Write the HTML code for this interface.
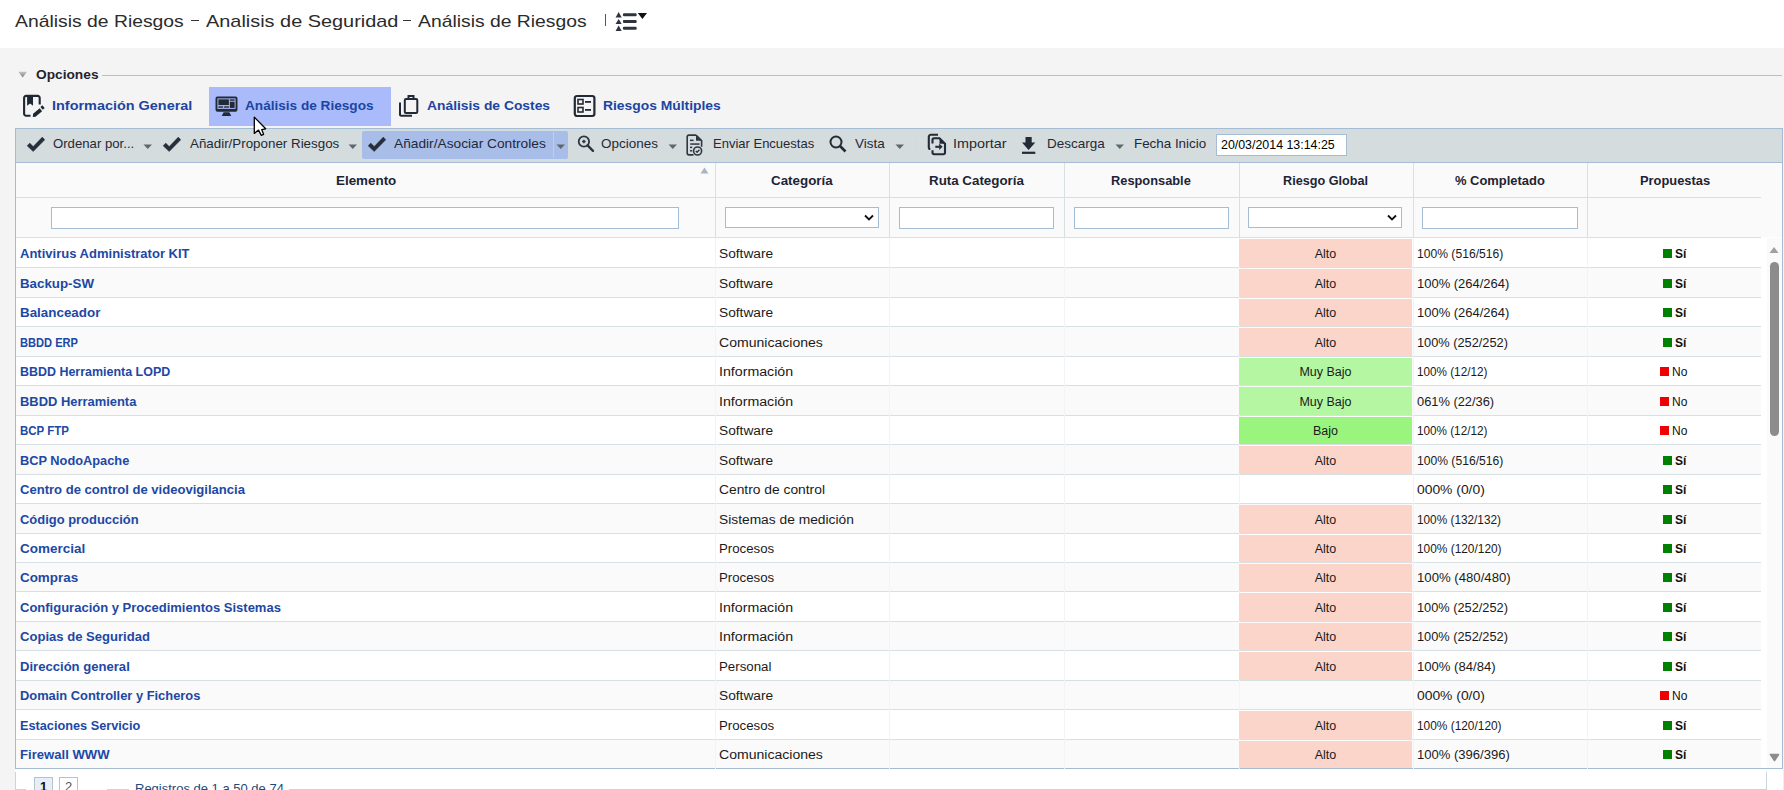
<!DOCTYPE html><html><head><meta charset="utf-8"><title>Análisis de Riesgos</title><style>
*{margin:0;padding:0;box-sizing:border-box}
html,body{width:1784px;height:790px;overflow:hidden;background:#f4f4f4;font-family:"Liberation Sans",sans-serif}
.a{position:absolute}
.t{position:absolute;white-space:nowrap;transform-origin:0 0;line-height:1}
#hdr{position:absolute;left:0;top:0;width:1784px;height:48px;background:#fff}
.title{font-size:17px;color:#2b2b2b}
.leg{font-size:13.5px;font-weight:bold;color:#1f2430}
.tab{font-size:13.5px;font-weight:bold;color:#1c45a2}
.tb{font-size:13px;color:#1f2937}
.th{font-size:12.5px;font-weight:bold;color:#1e2433}
.lnk{font-size:12px;font-weight:bold;color:#1d48a5}
.cel{font-size:12.5px;color:#1a1a1a}
.ctr{font-size:12.5px;color:#1a1a1a}
.pr{font-size:12px;color:#111}
.prb{font-size:12px;font-weight:bold;color:#111}
</style></head><body>
<div id="hdr">
<span class="t title" style="left:15px;top:13px;transform:scaleX(1.1378);">Análisis de Riesgos</span>
<span class="t title" style="left:205.5px;top:13px;transform:scaleX(1.1701);">Analisis de Seguridad</span>
<span class="t title" style="left:417.5px;top:13px;transform:scaleX(1.1372);">Análisis de Riesgos</span>
<div class="a" style="left:191.2px;top:19.8px;width:7.8px;height:1.4px;background:#333"></div>
<div class="a" style="left:403.4px;top:19.8px;width:7.6px;height:1.4px;background:#333"></div>
<div class="a" style="left:605px;top:14px;width:1px;height:12px;background:#1a5fc8"></div>
<svg class="a" style="left:615px;top:11px" width="34" height="22" viewBox="0 0 34 22">
<g fill="#2d3440"><path d="M0.6 6.6 L3.65 1 L6.7 6.6Z"/><path d="M0.6 13.1 L3.65 8 L6.7 13.1Z"/><path d="M0.6 20 L3.65 14.5 L6.7 20Z"/>
<rect x="7.9" y="2.3" width="13.8" height="3" rx="1.2"/><rect x="7.9" y="9" width="13.8" height="3" rx="1.2"/><rect x="7.9" y="15.7" width="13.8" height="3" rx="1.2"/></g>
<path d="M22.8 2 L32 2 L27.4 7.9Z" fill="#111"/></svg>
</div>
<svg class="a" style="left:18px;top:71px" width="10" height="8"><defs><linearGradient id="lg1" x1="0" y1="0" x2="0" y2="1"><stop offset="0" stop-color="#c4c4c4"/><stop offset="1" stop-color="#7c7c7c"/></linearGradient></defs><path d="M0.3 0.8 L9 0.8 L4.65 6.5Z" fill="url(#lg1)"/></svg>
<span class="t leg" style="left:36px;top:67.5px;transform:scaleX(1.0161);">Opciones</span>
<div class="a" style="left:102px;top:75px;width:1680px;height:1px;background:#a9c1d9"></div>
<div class="a" style="left:209px;top:87px;width:182px;height:39px;background:#a9bbfb"></div>
<span class="t tab" style="left:52px;top:98.8px;transform:scaleX(1.0687);">Información General</span>
<span class="t tab" style="left:245px;top:98.8px;transform:scaleX(1.0078);">Análisis de Riesgos</span>
<span class="t tab" style="left:427px;top:98.8px;transform:scaleX(1.0250);">Análisis de Costes</span>
<span class="t tab" style="left:603px;top:98.8px;transform:scaleX(1.0261);">Riesgos Múltiples</span>
<svg class="a" style="left:22px;top:94px" width="24" height="24" viewBox="0 0 24 24">
<path d="M8.5 21.7 H4.1 A2 2 0 0 1 2.1 19.7 V3.9 A2 2 0 0 1 4.1 1.9 H15.7 A2 2 0 0 1 17.7 3.9 V10.4" fill="none" stroke="#1f2733" stroke-width="2.1"/>
<path d="M5.1 1.9 H11 V11.8 L8.05 9.4 L5.1 11.8Z" fill="#1f2733"/>
<path d="M10.8 22.9 L11.1 19.85 L17.7 14.25 L20.1 17.15 L13.5 22.75Z" fill="#1f2733"/>
<path d="M19.6 14.35 L21.5 12.7" stroke="#1f2733" stroke-width="3.6"/></svg>
<svg class="a" style="left:215px;top:96px" width="23" height="21" viewBox="0 0 24 22">
<rect x="0.5" y="0.5" width="23" height="16" rx="2" fill="#222a35"/>
<rect x="2.5" y="2.5" width="19" height="11" fill="#a9bbfb"/>
<rect x="3.5" y="3.5" width="11" height="6" fill="#222a35"/><rect x="15.5" y="3.5" width="5" height="1.5" fill="#222a35"/><rect x="15.5" y="6" width="5" height="6.5" fill="#222a35"/>
<rect x="3.5" y="10.8" width="5" height="1.5" fill="#222a35"/><rect x="9.5" y="10.8" width="5" height="1.5" fill="#222a35"/>
<path d="M9 17 H15 L17 21 H7Z" fill="#222a35"/></svg>
<svg class="a" style="left:398px;top:94px" width="22" height="24" viewBox="0 0 22 24">
<rect x="6.8" y="5" width="12.5" height="14" rx="1.2" fill="none" stroke="#222a35" stroke-width="2"/>
<path d="M10.5 5 V2 H15.5 V5" fill="none" stroke="#222a35" stroke-width="2"/>
<path d="M2 8.5 V20.5 A1.2 1.2 0 0 0 3.2 21.8 H14" fill="none" stroke="#222a35" stroke-width="2"/></svg>
<svg class="a" style="left:573px;top:94px" width="23" height="24" viewBox="0 0 23 24">
<rect x="1.8" y="2" width="19.6" height="20" rx="2.2" fill="none" stroke="#222a35" stroke-width="2.2"/>
<rect x="5" y="5.5" width="5" height="4.5" fill="none" stroke="#222a35" stroke-width="1.6"/>
<rect x="5" y="13.5" width="5" height="4.5" fill="none" stroke="#222a35" stroke-width="1.6"/>
<rect x="12" y="7" width="6" height="1.8" fill="#222a35"/><rect x="12" y="15" width="6" height="1.8" fill="#222a35"/></svg>
<div class="a" style="left:15px;top:128px;width:1768px;height:35px;background:#d5dcdd;border:1px solid #a4bdd5"></div>
<div class="a" style="left:362px;top:131px;width:206px;height:28px;background:#a9bde9;border-radius:2px"></div>
<div class="a" style="left:553px;top:132px;width:1px;height:26px;background:#c2cde8"></div>
<div class="a" style="left:915px;top:134px;width:1px;height:24px;background:#d0dae0"></div>
<svg class="a" style="left:26px;top:136px" width="20" height="17" viewBox="0 0 20 17"><path d="M1.1 9.8 L3.8 7.1 L7.2 10.5 L16.3 1.1 L18.8 3.8 L7.2 15.6Z" fill="#262e3a" stroke="#262e3a" stroke-width="0.4" stroke-linejoin="round"/></svg>
<svg class="a" style="left:162px;top:136px" width="20" height="17" viewBox="0 0 20 17"><path d="M1.1 9.8 L3.8 7.1 L7.2 10.5 L16.3 1.1 L18.8 3.8 L7.2 15.6Z" fill="#262e3a" stroke="#262e3a" stroke-width="0.4" stroke-linejoin="round"/></svg>
<svg class="a" style="left:367px;top:136px" width="20" height="17" viewBox="0 0 20 17"><path d="M1.1 9.8 L3.8 7.1 L7.2 10.5 L16.3 1.1 L18.8 3.8 L7.2 15.6Z" fill="#262e3a" stroke="#262e3a" stroke-width="0.4" stroke-linejoin="round"/></svg>
<svg class="a" style="left:143px;top:144px" width="10" height="6"><path d="M0.5 0.5 H9 L4.75 5Z" fill="#5f6770"/></svg>
<svg class="a" style="left:348px;top:144px" width="10" height="6"><path d="M0.5 0.5 H9 L4.75 5Z" fill="#5f6770"/></svg>
<svg class="a" style="left:556px;top:144px" width="10" height="6"><path d="M0.5 0.5 H9 L4.75 5Z" fill="#5f6770"/></svg>
<svg class="a" style="left:668px;top:144px" width="10" height="6"><path d="M0.5 0.5 H9 L4.75 5Z" fill="#5f6770"/></svg>
<svg class="a" style="left:895px;top:144px" width="10" height="6"><path d="M0.5 0.5 H9 L4.75 5Z" fill="#5f6770"/></svg>
<svg class="a" style="left:1115px;top:144px" width="10" height="6"><path d="M0.5 0.5 H9 L4.75 5Z" fill="#5f6770"/></svg>
<span class="t tb" style="left:53px;top:137px;transform:scaleX(1.0125);">Ordenar por...</span>
<span class="t tb" style="left:190px;top:137px;transform:scaleX(1.0276);">Añadir/Proponer Riesgos</span>
<span class="t tb" style="left:394px;top:137px;transform:scaleX(1.0556);">Añadir/Asociar Controles</span>
<span class="t tb" style="left:601px;top:137px;transform:scaleX(1.0364);">Opciones</span>
<span class="t tb" style="left:713px;top:137px;transform:scaleX(1.0000);">Enviar Encuestas</span>
<span class="t tb" style="left:855px;top:137px;transform:scaleX(1.0345);">Vista</span>
<span class="t tb" style="left:953px;top:137px;transform:scaleX(1.1042);">Importar</span>
<span class="t tb" style="left:1047px;top:137px;transform:scaleX(1.0357);">Descarga</span>
<span class="t tb" style="left:1134px;top:137px;transform:scaleX(1.0286);">Fecha Inicio</span>
<svg class="a" style="left:577px;top:135px" width="18" height="18" viewBox="0 0 18 18">
<circle cx="6.9" cy="6.5" r="5.2" fill="none" stroke="#2f3540" stroke-width="1.8"/><path d="M10.6 10.4 L16 15.8" stroke="#2f3540" stroke-width="2.4" stroke-linecap="round"/>
<path d="M6.9 4.7 V8.3 M5.1 6.5 H8.7" stroke="#2f3540" stroke-width="1.5"/></svg>
<svg class="a" style="left:686px;top:134px" width="18" height="23" viewBox="0 0 18 23">
<g fill="none" stroke="#2f3742" stroke-width="1.6">
<path d="M10 1.1 H3 A1.8 1.8 0 0 0 1.2 2.9 V19.1 A1.8 1.8 0 0 0 3 20.9 H7.5"/>
<path d="M10 1.1 L15.6 6.7 V12.8"/>
<circle cx="11.6" cy="17" r="4"/><path d="M9.8 17 L11.1 18.3 L13.4 15.8" stroke-width="1.3"/></g>
<path d="M10 1.1 V6.7 H15.6Z" fill="#2f3742"/>
<g fill="#2f3742"><rect x="4" y="5.6" width="3.6" height="1.5"/><rect x="4.2" y="9.3" width="9.3" height="1.5"/><rect x="4" y="12.6" width="2.2" height="1.5"/><rect x="4" y="16" width="2.2" height="1.5"/></g></svg>
<svg class="a" style="left:829px;top:135px" width="18" height="18" viewBox="0 0 18 18">
<circle cx="7" cy="7" r="5.5" fill="none" stroke="#232b38" stroke-width="2"/><path d="M11 11 L16.5 16.5" stroke="#232b38" stroke-width="2.6"/></svg>
<svg class="a" style="left:927px;top:133px" width="20" height="23" viewBox="0 0 20 23">
<g fill="none" stroke="#232b38" stroke-width="2.1">
<path d="M11 1.8 H3.8 A2 2 0 0 0 1.8 3.8 V14.5 A1.5 1.5 0 0 0 3.3 16"/>
<path d="M5.5 10.5 V6.7 A1.5 1.5 0 0 1 7 5.2 H12.5 L18 10.7 V19.5 A1.7 1.7 0 0 1 16.3 21.2 H7.2 A1.7 1.7 0 0 1 5.5 19.5 V17.2"/>
<path d="M8.3 13.8 H12.8"/></g>
<path d="M12.5 5.2 V10.7 H18Z" fill="#232b38"/><path d="M12.2 10.6 L15.6 13.8 L12.2 17Z" fill="#232b38"/></svg>
<svg class="a" style="left:1020px;top:136px" width="18" height="19" viewBox="0 0 18 19">
<path d="M5.5 1.1 H11.7 V6.5 H15.3 L8.6 13.9 L2 6.5 H5.5Z" fill="#232b38"/><rect x="2" y="15.7" width="13.3" height="2.2" fill="#232b38"/></svg>
<div class="a" style="left:1216px;top:134px;width:131px;height:22px;background:#fff;border:1px solid #a4bdd5"></div>
<span class="t tb" style="left:1221px;top:139px;transform:scaleX(0.9913);font-size:12.5px;color:#000">20/03/2014 13:14:25</span>
<div class="a" style="left:15px;top:163px;width:1768px;height:606px;background:#fff;border:1px solid #a4bdd5;border-top:none"></div>
<div class="a" style="left:16px;top:163px;width:1766px;height:74px;background:#fafafa"></div>
<div class="a" style="left:16px;top:197px;width:1745px;height:1px;background:#d9e0e3"></div>
<div class="a" style="left:16px;top:237px;width:1745px;height:1px;background:#d9e0e3"></div>
<div class="a" style="left:715px;top:163px;width:1px;height:74px;background:#d9e0e3"></div>
<div class="a" style="left:889px;top:163px;width:1px;height:74px;background:#d9e0e3"></div>
<div class="a" style="left:1064px;top:163px;width:1px;height:74px;background:#d9e0e3"></div>
<div class="a" style="left:1239px;top:163px;width:1px;height:74px;background:#d9e0e3"></div>
<div class="a" style="left:1413px;top:163px;width:1px;height:74px;background:#d9e0e3"></div>
<div class="a" style="left:1587px;top:163px;width:1px;height:74px;background:#d9e0e3"></div>
<span class="t th" style="left:336px;top:174.8px;transform:scaleX(1.0714);">Elemento</span>
<span class="t th" style="left:771px;top:174.8px;transform:scaleX(1.0690);">Categoría</span>
<span class="t th" style="left:929px;top:174.8px;transform:scaleX(1.0674);">Ruta Categoría</span>
<span class="t th" style="left:1111px;top:174.8px;transform:scaleX(1.0256);">Responsable</span>
<span class="t th" style="left:1283px;top:174.8px;transform:scaleX(1.0119);">Riesgo Global</span>
<span class="t th" style="left:1455px;top:174.8px;transform:scaleX(1.0345);">% Completado</span>
<span class="t th" style="left:1640px;top:174.8px;transform:scaleX(1.0294);">Propuestas</span>
<svg class="a" style="left:700px;top:167px" width="9" height="7"><path d="M0.5 6.5 L4.5 0.5 L8.5 6.5Z" fill="#a9b4c4"/></svg>
<div class="a" style="left:51px;top:207px;width:628px;height:22px;background:#fff;border:1px solid #a4bdd5"></div>
<div class="a" style="left:899px;top:207px;width:155px;height:22px;background:#fff;border:1px solid #a4bdd5"></div>
<div class="a" style="left:1074px;top:207px;width:155px;height:22px;background:#fff;border:1px solid #a4bdd5"></div>
<div class="a" style="left:1422px;top:207px;width:156px;height:22px;background:#fff;border:1px solid #a4bdd5"></div>
<div class="a" style="left:725px;top:207px;width:154px;height:21px;background:#fff;border:1px solid #a4bdd5"></div><svg class="a" style="left:864px;top:213.5px" width="10" height="8"><path d="M1 1.5 L5 5.5 L9 1.5" fill="none" stroke="#111" stroke-width="1.8"/></svg>
<div class="a" style="left:1248px;top:207px;width:154px;height:21px;background:#fff;border:1px solid #a4bdd5"></div><svg class="a" style="left:1387px;top:213.5px" width="10" height="8"><path d="M1 1.5 L5 5.5 L9 1.5" fill="none" stroke="#111" stroke-width="1.8"/></svg>
<div class="a" style="left:16px;top:238px;width:1745px;height:29px;background:#ffffff"></div>
<div class="a" style="left:16px;top:267px;width:1745px;height:1px;background:#d9e0e3"></div>
<span class="t lnk" style="left:20px;top:248px;transform:scaleX(1.0853);">Antivirus Administrator KIT</span>
<span class="t cel" style="left:719px;top:248px;transform:scaleX(1.0980);">Software</span>
<span class="t cel" style="left:1417px;top:248px;transform:scaleX(0.9697);">100% (516/516)</span>
<div class="a" style="left:1663px;top:249.0px;width:9px;height:9px;background:#008000"></div>
<span class="t prb" style="left:1675px;top:248px;">Sí</span>
<div class="a" style="left:16px;top:268px;width:1745px;height:29px;background:#fafafa"></div>
<div class="a" style="left:16px;top:297px;width:1745px;height:1px;background:#d9e0e3"></div>
<span class="t lnk" style="left:20px;top:278px;transform:scaleX(1.1090);">Backup-SW</span>
<span class="t cel" style="left:719px;top:278px;transform:scaleX(1.0980);">Software</span>
<span class="t cel" style="left:1417px;top:278px;transform:scaleX(1.0371);">100% (264/264)</span>
<div class="a" style="left:1663px;top:279.0px;width:9px;height:9px;background:#008000"></div>
<span class="t prb" style="left:1675px;top:278px;">Sí</span>
<div class="a" style="left:16px;top:298px;width:1745px;height:28px;background:#ffffff"></div>
<div class="a" style="left:16px;top:326px;width:1745px;height:1px;background:#d9e0e3"></div>
<span class="t lnk" style="left:20px;top:307px;transform:scaleX(1.1153);">Balanceador</span>
<span class="t cel" style="left:719px;top:307px;transform:scaleX(1.0980);">Software</span>
<span class="t cel" style="left:1417px;top:307px;transform:scaleX(1.0371);">100% (264/264)</span>
<div class="a" style="left:1663px;top:308.0px;width:9px;height:9px;background:#008000"></div>
<span class="t prb" style="left:1675px;top:307px;">Sí</span>
<div class="a" style="left:16px;top:327px;width:1745px;height:29px;background:#fafafa"></div>
<div class="a" style="left:16px;top:356px;width:1745px;height:1px;background:#d9e0e3"></div>
<span class="t lnk" style="left:20px;top:337px;transform:scaleX(0.9254);">BBDD ERP</span>
<span class="t cel" style="left:719px;top:337px;transform:scaleX(1.1239);">Comunicaciones</span>
<span class="t cel" style="left:1417px;top:337px;transform:scaleX(1.0225);">100% (252/252)</span>
<div class="a" style="left:1663px;top:338.0px;width:9px;height:9px;background:#008000"></div>
<span class="t prb" style="left:1675px;top:337px;">Sí</span>
<div class="a" style="left:16px;top:357px;width:1745px;height:28px;background:#ffffff"></div>
<div class="a" style="left:16px;top:385px;width:1745px;height:1px;background:#d9e0e3"></div>
<span class="t lnk" style="left:20px;top:366px;transform:scaleX(1.0379);">BBDD Herramienta LOPD</span>
<span class="t cel" style="left:719px;top:366px;transform:scaleX(1.1354);">Información</span>
<span class="t cel" style="left:1417px;top:366px;transform:scaleX(0.9373);">100% (12/12)</span>
<div class="a" style="left:1660px;top:367.0px;width:9px;height:9px;background:#f00000"></div>
<span class="t pr" style="left:1672px;top:366px;">No</span>
<div class="a" style="left:16px;top:386px;width:1745px;height:29px;background:#fafafa"></div>
<div class="a" style="left:16px;top:415px;width:1745px;height:1px;background:#d9e0e3"></div>
<span class="t lnk" style="left:20px;top:396px;transform:scaleX(1.0769);">BBDD Herramienta</span>
<span class="t cel" style="left:719px;top:396px;transform:scaleX(1.1354);">Información</span>
<span class="t cel" style="left:1417px;top:396px;transform:scaleX(1.0280);">061% (22/36)</span>
<div class="a" style="left:1660px;top:397.0px;width:9px;height:9px;background:#f00000"></div>
<span class="t pr" style="left:1672px;top:396px;">No</span>
<div class="a" style="left:16px;top:416px;width:1745px;height:28px;background:#ffffff"></div>
<div class="a" style="left:16px;top:444px;width:1745px;height:1px;background:#d9e0e3"></div>
<span class="t lnk" style="left:20px;top:425px;transform:scaleX(0.9569);">BCP FTP</span>
<span class="t cel" style="left:719px;top:425px;transform:scaleX(1.0980);">Software</span>
<span class="t cel" style="left:1417px;top:425px;transform:scaleX(0.9373);">100% (12/12)</span>
<div class="a" style="left:1660px;top:426.0px;width:9px;height:9px;background:#f00000"></div>
<span class="t pr" style="left:1672px;top:425px;">No</span>
<div class="a" style="left:16px;top:445px;width:1745px;height:29px;background:#fafafa"></div>
<div class="a" style="left:16px;top:474px;width:1745px;height:1px;background:#d9e0e3"></div>
<span class="t lnk" style="left:20px;top:455px;transform:scaleX(1.0667);">BCP NodoApache</span>
<span class="t cel" style="left:719px;top:455px;transform:scaleX(1.0980);">Software</span>
<span class="t cel" style="left:1417px;top:455px;transform:scaleX(0.9697);">100% (516/516)</span>
<div class="a" style="left:1663px;top:456.0px;width:9px;height:9px;background:#008000"></div>
<span class="t prb" style="left:1675px;top:455px;">Sí</span>
<div class="a" style="left:16px;top:475px;width:1745px;height:28px;background:#ffffff"></div>
<div class="a" style="left:16px;top:503px;width:1745px;height:1px;background:#d9e0e3"></div>
<span class="t lnk" style="left:20px;top:484px;transform:scaleX(1.0884);">Centro de control de videovigilancia</span>
<span class="t cel" style="left:719px;top:484px;transform:scaleX(1.1052);">Centro de control</span>
<span class="t cel" style="left:1417px;top:484px;transform:scaleX(1.1082);">000% (0/0)</span>
<div class="a" style="left:1663px;top:485.0px;width:9px;height:9px;background:#008000"></div>
<span class="t prb" style="left:1675px;top:484px;">Sí</span>
<div class="a" style="left:16px;top:504px;width:1745px;height:29px;background:#fafafa"></div>
<div class="a" style="left:16px;top:533px;width:1745px;height:1px;background:#d9e0e3"></div>
<span class="t lnk" style="left:20px;top:514px;transform:scaleX(1.0782);">Código producción</span>
<span class="t cel" style="left:719px;top:514px;transform:scaleX(1.1025);">Sistemas de medición</span>
<span class="t cel" style="left:1417px;top:514px;transform:scaleX(0.9438);">100% (132/132)</span>
<div class="a" style="left:1663px;top:515.0px;width:9px;height:9px;background:#008000"></div>
<span class="t prb" style="left:1675px;top:514px;">Sí</span>
<div class="a" style="left:16px;top:534px;width:1745px;height:28px;background:#ffffff"></div>
<div class="a" style="left:16px;top:562px;width:1745px;height:1px;background:#d9e0e3"></div>
<span class="t lnk" style="left:20px;top:543px;transform:scaleX(1.1224);">Comercial</span>
<span class="t cel" style="left:719px;top:543px;transform:scaleX(1.0596);">Procesos</span>
<span class="t cel" style="left:1417px;top:543px;transform:scaleX(0.9506);">100% (120/120)</span>
<div class="a" style="left:1663px;top:544.0px;width:9px;height:9px;background:#008000"></div>
<span class="t prb" style="left:1675px;top:543px;">Sí</span>
<div class="a" style="left:16px;top:563px;width:1745px;height:28px;background:#fafafa"></div>
<div class="a" style="left:16px;top:591px;width:1745px;height:1px;background:#d9e0e3"></div>
<span class="t lnk" style="left:20px;top:572px;transform:scaleX(1.1173);">Compras</span>
<span class="t cel" style="left:719px;top:572px;transform:scaleX(1.0596);">Procesos</span>
<span class="t cel" style="left:1417px;top:572px;transform:scaleX(1.0528);">100% (480/480)</span>
<div class="a" style="left:1663px;top:573.0px;width:9px;height:9px;background:#008000"></div>
<span class="t prb" style="left:1675px;top:572px;">Sí</span>
<div class="a" style="left:16px;top:592px;width:1745px;height:29px;background:#ffffff"></div>
<div class="a" style="left:16px;top:621px;width:1745px;height:1px;background:#d9e0e3"></div>
<span class="t lnk" style="left:20px;top:602px;transform:scaleX(1.0838);">Configuración y Procedimientos Sistemas</span>
<span class="t cel" style="left:719px;top:602px;transform:scaleX(1.1354);">Información</span>
<span class="t cel" style="left:1417px;top:602px;transform:scaleX(1.0225);">100% (252/252)</span>
<div class="a" style="left:1663px;top:603.0px;width:9px;height:9px;background:#008000"></div>
<span class="t prb" style="left:1675px;top:602px;">Sí</span>
<div class="a" style="left:16px;top:622px;width:1745px;height:28px;background:#fafafa"></div>
<div class="a" style="left:16px;top:650px;width:1745px;height:1px;background:#d9e0e3"></div>
<span class="t lnk" style="left:20px;top:631px;transform:scaleX(1.0882);">Copias de Seguridad</span>
<span class="t cel" style="left:719px;top:631px;transform:scaleX(1.1354);">Información</span>
<span class="t cel" style="left:1417px;top:631px;transform:scaleX(1.0225);">100% (252/252)</span>
<div class="a" style="left:1663px;top:632.0px;width:9px;height:9px;background:#008000"></div>
<span class="t prb" style="left:1675px;top:631px;">Sí</span>
<div class="a" style="left:16px;top:651px;width:1745px;height:29px;background:#ffffff"></div>
<div class="a" style="left:16px;top:680px;width:1745px;height:1px;background:#d9e0e3"></div>
<span class="t lnk" style="left:20px;top:661px;transform:scaleX(1.0901);">Dirección general</span>
<span class="t cel" style="left:719px;top:661px;transform:scaleX(1.0633);">Personal</span>
<span class="t cel" style="left:1417px;top:661px;transform:scaleX(1.0467);">100% (84/84)</span>
<div class="a" style="left:1663px;top:662.0px;width:9px;height:9px;background:#008000"></div>
<span class="t prb" style="left:1675px;top:661px;">Sí</span>
<div class="a" style="left:16px;top:681px;width:1745px;height:28px;background:#fafafa"></div>
<div class="a" style="left:16px;top:709px;width:1745px;height:1px;background:#d9e0e3"></div>
<span class="t lnk" style="left:20px;top:690px;transform:scaleX(1.0732);">Domain Controller y Ficheros</span>
<span class="t cel" style="left:719px;top:690px;transform:scaleX(1.0980);">Software</span>
<span class="t cel" style="left:1417px;top:690px;transform:scaleX(1.1082);">000% (0/0)</span>
<div class="a" style="left:1660px;top:691.0px;width:9px;height:9px;background:#f00000"></div>
<span class="t pr" style="left:1672px;top:690px;">No</span>
<div class="a" style="left:16px;top:710px;width:1745px;height:29px;background:#ffffff"></div>
<div class="a" style="left:16px;top:739px;width:1745px;height:1px;background:#d9e0e3"></div>
<span class="t lnk" style="left:20px;top:720px;transform:scaleX(1.0602);">Estaciones Servicio</span>
<span class="t cel" style="left:719px;top:720px;transform:scaleX(1.0596);">Procesos</span>
<span class="t cel" style="left:1417px;top:720px;transform:scaleX(0.9506);">100% (120/120)</span>
<div class="a" style="left:1663px;top:721.0px;width:9px;height:9px;background:#008000"></div>
<span class="t prb" style="left:1675px;top:720px;">Sí</span>
<div class="a" style="left:16px;top:740px;width:1745px;height:28px;background:#fafafa"></div>
<span class="t lnk" style="left:20px;top:749px;transform:scaleX(1.0915);">Firewall WWW</span>
<span class="t cel" style="left:719px;top:749px;transform:scaleX(1.1239);">Comunicaciones</span>
<span class="t cel" style="left:1417px;top:749px;transform:scaleX(1.0427);">100% (396/396)</span>
<div class="a" style="left:1663px;top:750.0px;width:9px;height:9px;background:#008000"></div>
<span class="t prb" style="left:1675px;top:749px;">Sí</span>
<div class="a" style="left:715px;top:238px;width:1px;height:531px;background:#f1f3f4"></div>
<div class="a" style="left:889px;top:238px;width:1px;height:531px;background:#f1f3f4"></div>
<div class="a" style="left:1064px;top:238px;width:1px;height:531px;background:#f1f3f4"></div>
<div class="a" style="left:1239px;top:238px;width:1px;height:531px;background:#f1f3f4"></div>
<div class="a" style="left:1413px;top:238px;width:1px;height:531px;background:#f1f3f4"></div>
<div class="a" style="left:1587px;top:238px;width:1px;height:531px;background:#f1f3f4"></div>
<div class="a" style="left:1239px;top:239px;width:173px;height:28px;background:#fcd5ca"></div>
<span class="t cel" style="left:1239px;width:173px;text-align:center;top:248.0px">Alto</span>
<div class="a" style="left:1239px;top:269px;width:173px;height:28px;background:#fcd5ca"></div>
<span class="t cel" style="left:1239px;width:173px;text-align:center;top:278.0px">Alto</span>
<div class="a" style="left:1239px;top:299px;width:173px;height:27px;background:#fcd5ca"></div>
<span class="t cel" style="left:1239px;width:173px;text-align:center;top:307.0px">Alto</span>
<div class="a" style="left:1239px;top:328px;width:173px;height:28px;background:#fcd5ca"></div>
<span class="t cel" style="left:1239px;width:173px;text-align:center;top:337.0px">Alto</span>
<div class="a" style="left:1239px;top:358px;width:173px;height:27px;background:#b4f6a2"></div>
<span class="t cel" style="left:1239px;width:173px;text-align:center;top:366.0px">Muy Bajo</span>
<div class="a" style="left:1239px;top:387px;width:173px;height:28px;background:#b4f6a2"></div>
<span class="t cel" style="left:1239px;width:173px;text-align:center;top:396.0px">Muy Bajo</span>
<div class="a" style="left:1239px;top:417px;width:173px;height:27px;background:#99f57e"></div>
<span class="t cel" style="left:1239px;width:173px;text-align:center;top:425.0px">Bajo</span>
<div class="a" style="left:1239px;top:446px;width:173px;height:28px;background:#fcd5ca"></div>
<span class="t cel" style="left:1239px;width:173px;text-align:center;top:455.0px">Alto</span>
<div class="a" style="left:1239px;top:505px;width:173px;height:28px;background:#fcd5ca"></div>
<span class="t cel" style="left:1239px;width:173px;text-align:center;top:514.0px">Alto</span>
<div class="a" style="left:1239px;top:535px;width:173px;height:27px;background:#fcd5ca"></div>
<span class="t cel" style="left:1239px;width:173px;text-align:center;top:543.0px">Alto</span>
<div class="a" style="left:1239px;top:564px;width:173px;height:27px;background:#fcd5ca"></div>
<span class="t cel" style="left:1239px;width:173px;text-align:center;top:572.0px">Alto</span>
<div class="a" style="left:1239px;top:593px;width:173px;height:28px;background:#fcd5ca"></div>
<span class="t cel" style="left:1239px;width:173px;text-align:center;top:602.0px">Alto</span>
<div class="a" style="left:1239px;top:623px;width:173px;height:27px;background:#fcd5ca"></div>
<span class="t cel" style="left:1239px;width:173px;text-align:center;top:631.0px">Alto</span>
<div class="a" style="left:1239px;top:652px;width:173px;height:28px;background:#fcd5ca"></div>
<span class="t cel" style="left:1239px;width:173px;text-align:center;top:661.0px">Alto</span>
<div class="a" style="left:1239px;top:711px;width:173px;height:28px;background:#fcd5ca"></div>
<span class="t cel" style="left:1239px;width:173px;text-align:center;top:720.0px">Alto</span>
<div class="a" style="left:1239px;top:741px;width:173px;height:27px;background:#fcd5ca"></div>
<span class="t cel" style="left:1239px;width:173px;text-align:center;top:749.0px">Alto</span>
<div class="a" style="left:1762px;top:238px;width:20px;height:530px;background:#fff"></div><div class="a" style="left:1767px;top:238px;width:15px;height:530px;background:#fafafa"></div>
<svg class="a" style="left:1769px;top:246px" width="10" height="8"><path d="M0.5 7 L5 1 L9.5 7Z" fill="#a0a0a0"/></svg>
<div class="a" style="left:1770px;top:262px;width:9px;height:174px;background:#8c8c8c;border-radius:4.5px"></div>
<svg class="a" style="left:1769px;top:753px" width="11" height="9"><path d="M1.5 1.5 L9.5 1.5 L5.5 7.5Z" fill="#8c8c8c" stroke="#8c8c8c" stroke-width="1.6" stroke-linejoin="round"/></svg>
<div class="a" style="left:15px;top:769px;width:1769px;height:21px;background:#fff"></div>
<div class="a" style="left:15px;top:772px;width:1px;height:18px;background:#c9d5de"></div>
<div class="a" style="left:1766px;top:772px;width:1px;height:18px;background:#c9d5de"></div>
<div class="a" style="left:1783px;top:769px;width:1px;height:21px;background:#eeeeee"></div>
<div class="a" style="left:34px;top:777px;width:19px;height:15px;background:#e6eef7;border:1px solid #b5c3cf"></div>
<div class="a" style="left:59px;top:777px;width:19px;height:15px;background:#fff;border:1px solid #b5c3cf"></div>
<span class="t prb" style="left:40px;top:780px;font-size:13px">1</span>
<span class="t pr" style="left:65px;top:780px;font-size:13px;color:#555">2</span>
<span class="t pr" style="left:135px;top:782px;transform:scaleX(1.0000);font-size:13px;color:#1d4a7a">Registros de 1 a 50 de 74</span>
<div class="a" style="left:16px;top:789px;width:10px;height:1px;background:#c9d5de"></div>
<div class="a" style="left:107px;top:789px;width:22px;height:1px;background:#c9d5de"></div>
<div class="a" style="left:289px;top:789px;width:1478px;height:1px;background:#c9d5de"></div>
<svg class="a" style="left:252px;top:115px;z-index:9" width="16" height="23" viewBox="0 0 16 23">
<path d="M2.3 2.2 V18.4 L6.5 15.1 L9.3 20.4 L11.6 19.3 L9.7 14.6 L13.7 13.8Z" fill="#fff" stroke="#000" stroke-width="1.3" stroke-linejoin="round"/></svg>
</body></html>
